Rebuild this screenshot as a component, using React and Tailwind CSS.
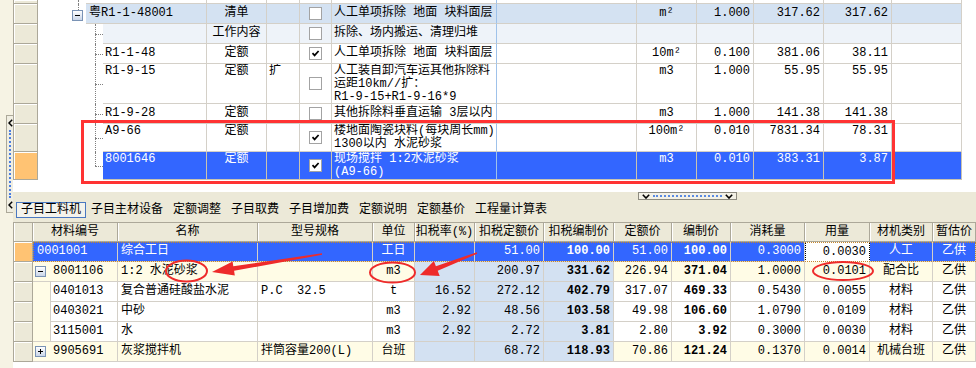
import React from 'react';

const F = "font-['Liberation_Mono','Noto_Sans_CJK_SC',monospace]";

const Check = ({ on }) => (
  <span className="w-[13px] h-[13px] border border-[#a3a3a3] bg-white flex items-center justify-center shrink-0">
    {on && (
      <svg width="9" height="9" viewBox="0 0 9 9">
        <path d="M1.5 4.2 L3.6 6.4 L7.6 2" fill="none" stroke="#000" strokeWidth="1.7" />
      </svg>
    )}
  </span>
);

const Expander = ({ plus }) => (
  <span className="w-[11px] h-[11px] border border-[#7a93b5] bg-linear-to-b from-white to-[#c9d5e8] flex items-center justify-center shrink-0">
    <svg width="7" height="7" viewBox="0 0 7 7">
      <path d="M1 3.5H6" stroke="#000" strokeWidth="1" />
      {plus && <path d="M3.5 1V6" stroke="#000" strokeWidth="1" />}
    </svg>
  </span>
);

const topRows = [
  { h: 'h-[4px]', kind: 'partial' },
  { h: 'h-[20px]', kind: 'bill', bg: 'bg-[#d4e2f2]', code: '粤R1-1-48001', type: '清单', chk: false, name: ['人工单项拆除 地面 块料面层'], unit: 'm²', qty: '1.000', price: '317.62', total: '317.62' },
  { h: 'h-[20px]', bg: 'bg-[#eef3f9]', code: '', type: '工作内容', chk: false, name: ['拆除、场内搬运、清理归堆'] },
  { h: 'h-[20px]', code: 'R1-1-48', type: '定额', chk: true, name: ['人工单项拆除 地面 块料面层'], unit: '10m²', qty: '0.100', price: '381.06', total: '38.11' },
  { h: 'h-[40px]', multi: true, code: 'R1-9-15', type: '定额', ext: '扩', chk: false, name: ['人工装自卸汽车运其他拆除料', '运距10km//扩：', 'R1-9-15+R1-9-16*9'], unit: 'm3', qty: '1.000', price: '55.95', total: '55.95' },
  { h: 'h-[20px]', code: 'R1-9-28', type: '定额', chk: false, name: ['其他拆除料垂直运输 3层以内'], unit: 'm3', qty: '1.000', price: '141.38', total: '141.38' },
  { h: 'h-[28px]', multi: true, code: 'A9-66', type: '定额', chk: true, name: ['楼地面陶瓷块料(每块周长mm)', '1300以内 水泥砂浆'], unit: '100m²', qty: '0.010', price: '7831.34', total: '78.31' },
  { h: 'h-[28px]', multi: true, code: '8001646', type: '定额', chk: true, name: ['现场搅拌 1:2水泥砂浆', '(A9-66)'], unit: 'm3', qty: '0.010', price: '383.31', total: '3.87', sel: true, last: true },
];

const Indent = ({ kind, last }) => {
  if (kind === 'partial') {
    return (
      <div className="w-[48px] h-full shrink-0 relative">
        <div className="absolute left-[40px] top-0 h-full border-l border-dotted border-[#808080]" />
      </div>
    );
  }
  if (kind === 'bill') {
    return (
      <div className="w-[48px] h-full shrink-0 relative">
        <div className="absolute left-[40px] top-0 h-[6px] border-l border-dotted border-[#808080]" />
        <div className="absolute left-[34px] top-[6px]">
          <Expander />
        </div>
      </div>
    );
  }
  return (
    <div className="w-[65px] h-full shrink-0 relative">
      <div className={`absolute left-[57px] top-0 ${last ? 'h-1/2' : 'h-full'} border-l border-dotted border-[#808080]`} />
      <div className="absolute left-[57px] top-1/2 w-[8px] border-t border-dotted border-[#808080]" />
    </div>
  );
};

const TopRow = ({ r }) => {
  const sel = r.sel;
  const bg = sel ? 'bg-[#3366ff] text-white' : r.bg || 'bg-white';
  const bb = sel ? 'border-b-[#c9c3b0]' : 'border-b-[#d4d0c8]';
  const br = sel ? 'border-r-[#c9c3b0]' : 'border-r-[#d4d0c8]';
  const cell = (w, extra = '', rc = br) =>
    `h-full shrink-0 border-r border-b ${bb} ${rc} ${w} ${bg} whitespace-nowrap overflow-hidden ${extra}`;
  const txt = r.multi ? 'pt-[1px] leading-[13px]' : 'pt-[3px] leading-[12px]';

  return (
    <div className={`flex shrink-0 ${r.h}`}>
      <div className={`w-[25px] h-full shrink-0 border-l border-r border-b border-[#aca899] shadow-[inset_1px_1px_0_#fff] ${sel ? 'bg-[#ffc373]' : 'bg-[#ece9d8]'}`} />
      <div className="w-[169px] h-full shrink-0 flex">
        <Indent kind={r.kind} last={r.last} />
        <div className={cell('flex-1', `${txt} ${r.kind === 'bill' ? 'pl-[3px]' : 'pl-[2px]'}`)}>{r.code}</div>
      </div>
      <div className={cell('w-[60px]', `${txt} text-center`)}>{r.type}</div>
      <div className={cell('w-[33px]', `${txt} pl-[2px]`)}>{r.ext}</div>
      <div className={cell('w-[32px]', 'flex items-center justify-center')}>
        {r.kind !== 'partial' && <Check on={r.chk} />}
      </div>
      <div className={cell('w-[165px]', `${txt} pl-[2px]`, 'border-r-[#9fc2ea]')}>
        {r.name && r.name.map((l) => <div key={l}>{l}</div>)}
      </div>
      <div className={cell('w-[140px]')} />
      <div className={cell('w-[60px]', `${txt} text-center`)}>{r.unit}</div>
      <div className={cell('w-[57px]', `${txt} text-right pr-[3px]`)}>{r.qty}</div>
      <div className={cell('w-[70px]', `${txt} text-right pr-[3px]`)}>{r.price}</div>
      <div className={cell('w-[68px]', `${txt} text-right pr-[3px]`)}>{r.total}</div>
      <div className={cell('w-[70px]')} />
      <div className="flex-1 h-full bg-white" />
    </div>
  );
};

const headers = ['材料编号', '名称', '型号规格', '单位', '扣税率(%)', '扣税定额价', '扣税编制价', '定额价', '编制价', '消耗量', '用量', '材机类别', '暂估价'];
const bw = ['w-[85px]', 'w-[140px]', 'w-[115px]', 'w-[42px]', 'w-[60px]', 'w-[69px]', 'w-[70px]', 'w-[58px]', 'w-[59px]', 'w-[74px]', 'w-[65px]', 'w-[63px]', 'flex-1'];
const align = ['', 'text-left pl-[3px]', 'text-left pl-[3px]', 'text-center', 'text-right pr-[3px]', 'text-right pr-[3px]', 'text-right pr-[3px]', 'text-right pr-[3px]', 'text-right pr-[3px]', 'text-right pr-[3px]', 'text-right pr-[3px]', 'text-center', 'text-center'];

const bRows = [
  { kind: 'sel', code: '0001001', name: '综合工日', spec: '', unit: '工日', v: ['', '51.00', '100.00', '51.00', '100.00', '0.3000', '0.0030'], cat: '人工' },
  { kind: 'group', code: '8001106', name: '1:2 水泥砂浆', spec: '', unit: 'm3', v: ['', '200.97', '331.62', '226.94', '371.04', '1.0000', '0.0101'], cat: '配合比' },
  { kind: 'child', code: '0401013', name: '复合普通硅酸盐水泥', spec: 'P.C  32.5', unit: 't', v: ['16.52', '272.12', '402.79', '317.07', '469.33', '0.5430', '0.0055'], cat: '材料' },
  { kind: 'child', code: '0403021', name: '中砂', spec: '', unit: 'm3', v: ['2.92', '48.56', '103.58', '49.98', '106.60', '1.0790', '0.0109'], cat: '材料' },
  { kind: 'child', code: '3115001', name: '水', spec: '', unit: 'm3', v: ['2.92', '2.72', '3.81', '2.80', '3.92', '0.3000', '0.0030'], cat: '材料', last: true },
  { kind: 'group', plus: true, code: '9905691', name: '灰浆搅拌机', spec: '拌筒容量200(L)', unit: '台班', v: ['', '68.72', '118.93', '70.86', '121.24', '0.1370', '0.0014'], cat: '机械台班' },
];

const BRow = ({ r }) => {
  const sel = r.kind === 'sel';
  const rowBg = sel ? 'bg-[#3366ff] text-white' : r.kind === 'group' ? 'bg-[#fffce6]' : 'bg-white';
  const base = 'h-full shrink-0 border-r border-b border-[#d4d0c8] leading-[19px] whitespace-pre overflow-hidden';
  const vals = [r.name, r.spec, r.unit, ...r.v, r.cat, '乙供'];

  let codeCell;
  if (sel) {
    codeCell = <div className={`${base} ${bw[0]} ${rowBg} pl-[4px]`}>{r.code}</div>;
  } else if (r.kind === 'group') {
    codeCell = (
      <div className={`${base} ${bw[0]} ${rowBg} flex items-center pl-[2px]`}>
        <Expander plus={r.plus} />
        <span className="ml-[7px]">{r.code}</span>
      </div>
    );
  } else {
    codeCell = (
      <div className={`${bw[0]} h-full shrink-0 flex`}>
        <div className={`w-[17px] h-full shrink-0 bg-[#fffce6] ${r.last ? 'border-b border-[#d4d0c8]' : ''}`} />
        <div className={`${base} flex-1 border-l bg-white pl-[2px]`}>{r.code}</div>
      </div>
    );
  }

  return (
    <div className="flex h-[20px] shrink-0">
      <div className={`w-[20px] h-full shrink-0 border-l border-r border-b border-[#aca899] shadow-[inset_1px_1px_0_#fff] ${sel ? 'bg-[#ffc373]' : 'bg-[#ece9d8]'}`} />
      <div className={`flex flex-1 h-full ${sel ? 'outline-1 outline-dotted outline-[#c8882c] -outline-offset-1' : ''}`}>
        {codeCell}
        {vals.map((v, k) => {
          const i = k + 1;
          const bold = i === 6 || i === 8 ? 'font-bold' : '';
          if (sel && i === 10) {
            return (
              <div key={i} className={`${bw[i]} h-full shrink-0 bg-white text-black border border-dotted border-black leading-[18px] text-right pr-[3px]`}>
                {v}
              </div>
            );
          }
          const bg = !sel && i >= 4 && i <= 6 ? 'bg-[#d3e1f2]' : rowBg;
          return (
            <div key={i} className={`${base} ${bw[i]} ${align[i]} ${bg} ${bold}`}>
              {v}
            </div>
          );
        })}
      </div>
    </div>
  );
};

const ChevDown = () => (
  <svg width="8" height="5" viewBox="0 0 8 5">
    <path d="M0.8 0.8 L4 4 L7.2 0.8" fill="none" stroke="#000" strokeWidth="1.6" />
  </svg>
);

const ChevLeft = () => (
  <svg width="5" height="8" viewBox="0 0 5 8">
    <path d="M4.2 0.8 L1 4 L4.2 7.2" fill="none" stroke="#000" strokeWidth="1.5" />
  </svg>
);

const TabBar = () => {
  const tabs = ['子目工料机', '子目主材设备', '定额调整', '子目取费', '子目增加费', '定额说明', '定额基价', '工程量计算表'];
  return (
    <div className="h-[30px] shrink-0 bg-[#ece9d8] flex flex-col">
      <div className="h-[10px] flex shrink-0">
        <div className="ml-[625px] w-[99px] h-[8px] border border-[#8d8b80] bg-[#f3f1e6] flex items-center px-[3px] gap-[3px]">
          <ChevDown />
          <div className="flex-1 border-t-2 border-dotted border-[#5a8ae0]" />
          <ChevDown />
        </div>
      </div>
      <div className="flex pl-[3px] h-[16px]">
        {tabs.map((t, i) => (
          <div
            key={t}
            className={`h-full whitespace-nowrap ${i === 0 ? 'border border-[#4a78c0] bg-[#f4f3ec] px-[4px] leading-[14px]' : 'px-[5px] leading-[16px]'}`}
          >
            {t}
          </div>
        ))}
      </div>
    </div>
  );
};

const Annotations = () => (
  <>
    <div className="absolute left-[81px] top-[120px] w-[814px] h-[64px] border-[3px] border-[#ff3333] pointer-events-none" />
    <svg className="absolute left-0 top-0 pointer-events-none" width="976" height="368" viewBox="0 0 976 368">
      <ellipse cx="186.5" cy="271" rx="20.5" ry="10.5" fill="none" stroke="#ee2b2b" strokeWidth="2" />
      <ellipse cx="392.5" cy="272.5" rx="22.5" ry="10" fill="none" stroke="#ee2b2b" strokeWidth="2" />
      <ellipse cx="843" cy="271" rx="30" ry="9" fill="none" stroke="#ee2b2b" strokeWidth="2" />
      <polygon
        points="321.9,253.3 233.3,266.2 232.6,261.4 212,272 234.8,275.6 234.1,270.8 322.1,254.7"
        fill="#ee2b2b"
      />
      <polygon
        points="476.8,252.2 435.9,266.2 433.9,261 420,275 439.7,276 437.7,270.8 477.2,253.8"
        fill="#ee2b2b"
      />
    </svg>
  </>
);

export default function App() {
  return (
    <div className={`relative w-[976px] h-[368px] overflow-hidden bg-white flex text-[12px] text-black ${F}`}>
      {/* left splitter strip */}
      <div className="w-[13px] h-full shrink-0 bg-[#f6f3e4] flex flex-col">
        <div className="mt-[115px] ml-[6px] w-[7px] h-[98px] border-l border-y border-[#aca899] bg-[#f0eee2] flex flex-col items-center py-[3px]">
          <ChevLeft />
          <div className="flex-1 my-[3px] border-l-2 border-dotted border-[#4a7de0]" />
          <ChevLeft />
        </div>
      </div>

      <div className="flex-1 flex flex-col min-w-0">
        {/* quota grid */}
        <div className="h-[180px] shrink-0 flex flex-col">
          {topRows.map((r, i) => (
            <TopRow key={i} r={r} />
          ))}
        </div>
        <div className="h-[12px] shrink-0 bg-white" />

        <TabBar />

        {/* material grid */}
        <div className="flex h-[20px] shrink-0 border-t border-b border-[#aca899] bg-[#ece9d8]">
          <div className="w-[20px] h-full shrink-0 border-l border-r border-[#aca899] shadow-[inset_1px_0_0_#fff]" />
          {headers.map((h, i) => (
            <div
              key={h}
              className={`${bw[i]} h-full shrink-0 border-r border-[#aca899] shadow-[inset_1px_0_0_#fff] text-center leading-[18px] whitespace-nowrap overflow-hidden`}
            >
              {h}
            </div>
          ))}
        </div>
        {bRows.map((r) => (
          <BRow key={r.code} r={r} />
        ))}
      </div>

      <Annotations />
    </div>
  );
}
